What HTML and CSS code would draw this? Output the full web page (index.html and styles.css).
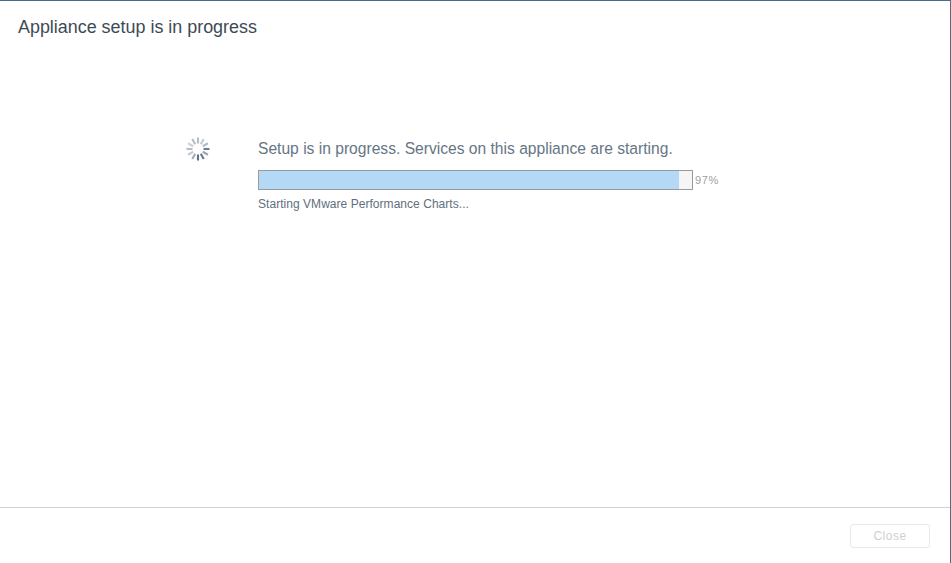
FILE: index.html
```html
<!DOCTYPE html>
<html lang="en">
<head>
<meta charset="utf-8">
<title>Appliance setup is in progress</title>
<link rel="stylesheet" href="styles.css">
</head>
<body>
<div class="dialog">
  <h1 class="title">Appliance setup is in progress</h1>
  <main class="content">
    <svg class="spinner" width="24" height="24" viewBox="0 0 24 24" fill="none" stroke-width="2.1">
      <path d="M12 .5v6" stroke="#b4bcc4"/>
      <path d="M17.750 2.040l-3 5.200" stroke="#c4cad0"/>
      <path d="M21.960 6.250l-5.200 3" stroke="#b4bcc4"/>
      <path d="M23.500 12h-6" stroke="#6b7d8c"/>
      <path d="M21.960 17.750l-5.200-3" stroke="#9aa6b1"/>
      <path d="M17.750 21.960l-3-5.200" stroke="#66798a"/>
      <path d="M12 23.500v-6" stroke="#5c7083"/>
      <path d="M6.250 21.960l3-5.200" stroke="#a3adb7"/>
      <path d="M2.040 17.750l5.200-3" stroke="#c4cad0"/>
      <path d="M.5 12h6" stroke="#b4bcc4"/>
      <path d="M2.040 6.250l5.200 3" stroke="#cdd2d7"/>
      <path d="M6.250 2.040l3 5.200" stroke="#b4bcc4"/>
    </svg>
    <section class="status">
      <p class="message">Setup is in progress. Services on this appliance are starting.</p>
      <div class="progress-row">
        <div class="track"><div class="fill" style="width:97%"></div></div>
        <span class="percent">97%</span>
      </div>
      <p class="step">Starting VMware Performance Charts...</p>
    </section>
  </main>
  <footer class="footer">
    <button class="close" type="button" disabled>Close</button>
  </footer>
</div>
</body>
</html>
```

FILE: styles.css
```css
* { box-sizing: border-box; }
html, body { margin: 0; height: 100%; }
body {
  background: #fff;
  font-family: "Liberation Sans", Arial, sans-serif;
  overflow: hidden;
}
.dialog {
  display: flex;
  flex-direction: column;
  height: 563px;
  border-top: 1px solid #4a6b8c;
  border-right: 1px solid #5f6b75;
}
.title {
  margin: 0;
  padding: 16px 18px 0;
  height: 136px;
  font-size: 17.92px;
  line-height: 21px;
  font-weight: 400;
  color: #3d4a56;
}
.content {
  flex: 1;
  display: flex;
  align-items: flex-start;
  padding-left: 186px;
}
.spinner { flex: none; }
.status { margin-left: 48px; }
.message {
  margin: 0;
  padding-top: 1px;
  font-size: 15.62px;
  line-height: 22px;
  color: #667684;
}
.progress-row {
  display: flex;
  align-items: center;
  margin-top: 10px;
}
.track {
  width: 435px;
  height: 20px;
  border: 1px solid #9a9a9a;
  background: #f5f5f5;
}
.fill { height: 100%; background: #b3d9f7; }
.percent {
  margin-left: 2px;
  font-size: 11px;
  color: #a0a0a0;
  letter-spacing: 0.6px;
}
.step {
  margin: 7px 0 0;
  font-size: 12px;
  line-height: 15px;
  letter-spacing: 0.04px;
  color: #5f6f7d;
}
.footer {
  display: flex;
  justify-content: flex-end;
  align-items: flex-start;
  height: 56px;
  border-top: 1px solid #ccd3d3;
  padding: 16px 20px 0 0;
}
.close {
  width: 80px;
  height: 24px;
  padding: 0;
  background: #fff;
  border: 1px solid #e8e8e8;
  border-radius: 3px;
  font: 12px "Liberation Sans", Arial, sans-serif;
  letter-spacing: 0.5px;
  color: #cfcfcf;
}
```
